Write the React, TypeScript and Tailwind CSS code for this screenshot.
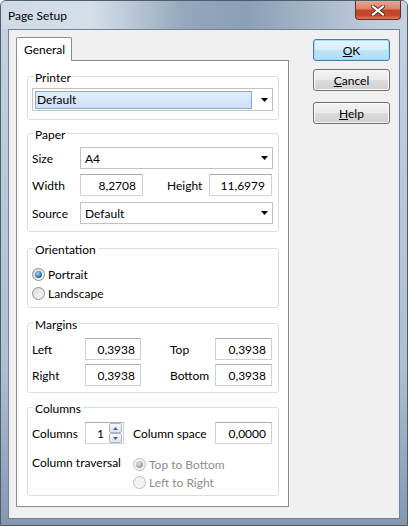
import type { ReactNode } from "react";

function Arrow() {
  return (
    <svg width="7" height="4" viewBox="0 0 7 4" className="shrink-0">
      <path d="M0 0H7L3.5 4Z" fill="#000" />
    </svg>
  );
}

function Combo({
  value,
  className = "",
  focused = false,
}: {
  value: string;
  className?: string;
  focused?: boolean;
}) {
  return (
    <div
      className={`flex items-center border border-[#c2c2c2] bg-white ${className}`}
    >
      {focused ? (
        <div className="ml-[2px] flex h-[18px] flex-1 items-center border border-[#85acdc] bg-[linear-gradient(to_bottom,#e0edfc,#cde0f8)] pl-[1px]">
          {value}
        </div>
      ) : (
        <div className="flex-1 pl-[4px]">{value}</div>
      )}
      <div className="flex w-[20px] justify-end pr-[4px]">
        <Arrow />
      </div>
    </div>
  );
}

function NumBox({ value, className = "" }: { value: string; className?: string }) {
  return (
    <div
      className={`flex h-[22px] items-center justify-end border border-[#cfd1d6] border-t-[#abadb3] bg-white pr-[5px] ${className}`}
    >
      {value}
    </div>
  );
}

function Radio({ checked = false, disabled = false }: { checked?: boolean; disabled?: boolean }) {
  return (
    <span
      className={`flex h-[13px] w-[13px] shrink-0 items-center justify-center rounded-full border ${
        disabled
          ? "border-[#bcbcbc] bg-[#f2f2f2]"
          : "border-[#8b8e93] bg-[linear-gradient(135deg,#d6d8db,#fbfbfb)]"
      }`}
    >
      {checked && (
        <span
          className={`h-[7px] w-[7px] rounded-full ${
            disabled
              ? "bg-[radial-gradient(circle_at_40%_35%,#e2e2e2,#9a9a9a_75%)]"
              : "bg-[radial-gradient(circle_at_40%_35%,#a8d6f7,#1d5c96_75%)]"
          }`}
        />
      )}
    </span>
  );
}

function Group({
  title,
  className = "",
  children,
}: {
  title: string;
  className?: string;
  children: ReactNode;
}) {
  return (
    <fieldset className={`w-[252px] rounded-[3px] border border-[#d5dfe5] ${className}`}>
      <legend className="ml-[5px] px-[2px] leading-[14px]">
        {/* Segoe-style labels sit a little below the group line */}
        <span className="relative top-[2px]">{title}</span>
      </legend>
      {children}
    </fieldset>
  );
}

function Btn({ children, def = false }: { children: ReactNode; def?: boolean }) {
  return (
    <div
      className={`flex h-[22px] w-[77px] items-center justify-center rounded-[3px] border ${
        def
          ? "border-[#3c7fb1] bg-[linear-gradient(to_bottom,#e6f4fc_0%,#d6eefb_50%,#bfe3f7_50%,#b0dbf3_100%)] shadow-[inset_0_0_0_1px_#9fdcf9]"
          : "border-[#707070] bg-[linear-gradient(to_bottom,#f2f2f2_0%,#ebebeb_50%,#dddddd_50%,#cfcfcf_100%)] shadow-[inset_0_0_0_1px_#fbfbfb]"
      }`}
    >
      {children}
    </div>
  );
}

function CloseButton() {
  return (
    <div className="mr-[6px] flex h-[19px] w-[46px] items-center justify-center rounded-b-[4px] border border-t-0 border-[#6d2b1f] bg-[linear-gradient(to_bottom,#e9a896_0%,#d9806a_45%,#c2482a_50%,#c9452a_80%,#e07a5c_100%)]">
      <svg width="14" height="11" viewBox="0 0 14 11">
        <path d="M2 1.5L12 9.5M12 1.5L2 9.5" stroke="#5a2a22" strokeWidth="4" strokeLinecap="square" />
        <path d="M2 1.5L12 9.5M12 1.5L2 9.5" stroke="#ffffff" strokeWidth="2.2" strokeLinecap="square" />
      </svg>
    </div>
  );
}

export default function App() {
  return (
    <div className="flex h-[526px] w-[408px] flex-col overflow-hidden rounded-t-[6px] border border-[#4f5c6b] bg-[linear-gradient(to_bottom,#c5d3e2,#aebfd2_70%,#8498b0)] font-['Lato','Liberation_Sans',sans-serif] text-[12px] leading-[15px] text-black">
      {/* Title bar */}
      <div className="flex h-[28px] shrink-0 items-start justify-between bg-[linear-gradient(to_right,#cfdae6_0%,#d5dfe9_22%,#bac8d7_32%,#95a8be_45%,#8a9eb6_60%,#a3b4c7_75%,#bccadb_90%,#c4d1df_100%)]">
        <span className="ml-[7px] mt-[7px]">Page Setup</span>
        <CloseButton />
      </div>

      {/* Client area */}
      <div className="mx-[7px] mb-[6px] flex flex-1 border border-[#708095] bg-[#f0f0f0] pl-[7px] pt-[7px]">
        <div className="flex w-[273px] flex-col">
          <div className="flex h-[24px] shrink-0">
            <div className="relative z-10 flex h-[24px] w-[56px] items-center rounded-t-[2px] border border-b-0 border-[#898c95] bg-white pl-[7px]">
              General
            </div>
          </div>
          <div className="-mt-px h-[447px] border border-[#898c95] bg-white px-[10px] pt-[8px]">
            <Group title="Printer">
              <div className="px-[4px] pb-[8px] pt-[5px]">
                <Combo value="Default" focused className="h-[23px] w-[241px]" />
              </div>
            </Group>

            <Group title="Paper" className="mt-[6px]">
              <div className="px-[4px] pb-[7px] pt-[7px]">
                <div className="flex items-center">
                  <span className="w-[48px]">Size</span>
                  <Combo value="A4" className="h-[22px] w-[193px]" />
                </div>
                <div className="mt-[5px] flex items-center">
                  <span className="w-[48px]">Width</span>
                  <NumBox value="8,2708" className="w-[63px] pr-[6px]" />
                  <span className="ml-[24px] w-[42px]">Height</span>
                  <NumBox value="11,6979" className="w-[63px] pr-[6px]" />
                </div>
                <div className="mt-[6px] flex items-center">
                  <span className="w-[48px]">Source</span>
                  <Combo value="Default" className="h-[22px] w-[193px]" />
                </div>
              </div>
            </Group>

            <Group title="Orientation" className="mt-[9px]">
              <div className="px-[4px] pb-[6px] pt-[11px]">
                <div className="flex h-[16px] items-center gap-[3px]">
                  <Radio checked />
                  <span>Portrait</span>
                </div>
                <div className="mt-[3px] flex h-[16px] items-center gap-[3px]">
                  <Radio />
                  <span>Landscape</span>
                </div>
              </div>
            </Group>

            <Group title="Margins" className="mt-[8px]">
              <div className="px-[4px] pb-[6px] pt-[8px]">
                <div className="flex items-center">
                  <span className="w-[53px]">Left</span>
                  <NumBox value="0,3938" className="w-[56px]" />
                  <span className="ml-[29px] w-[45px]">Top</span>
                  <NumBox value="0,3938" className="w-[57px]" />
                </div>
                <div className="mt-[4px] flex items-center">
                  <span className="w-[53px]">Right</span>
                  <NumBox value="0,3938" className="w-[56px]" />
                  <span className="ml-[29px] w-[45px]">Bottom</span>
                  <NumBox value="0,3938" className="w-[57px]" />
                </div>
              </div>
            </Group>

            <Group title="Columns" className="mt-[7px]">
              <div className="px-[4px] pb-[5px] pt-[8px]">
                <div className="flex items-center">
                  <span className="w-[53px]">Columns</span>
                  <div className="flex h-[22px] w-[39px] items-center border border-[#cfd1d6] border-t-[#abadb3] bg-white">
                    <span className="flex-1 pr-[5px] text-right">1</span>
                    <div className="mr-[1px] flex flex-col">
                      <div className="flex h-[10px] w-[13px] items-center justify-center rounded-[2px] border border-[#a9b6c6] bg-[linear-gradient(to_bottom,#f6f8fb,#dde5ef)]">
                        <svg width="5" height="3" viewBox="0 0 5 3">
                          <path d="M0 3H5L2.5 0Z" fill="#4a6287" />
                        </svg>
                      </div>
                      <div className="flex h-[10px] w-[13px] items-center justify-center rounded-[2px] border border-[#a9b6c6] bg-[linear-gradient(to_bottom,#f6f8fb,#dde5ef)]">
                        <svg width="5" height="3" viewBox="0 0 5 3">
                          <path d="M0 0H5L2.5 3Z" fill="#4a6287" />
                        </svg>
                      </div>
                    </div>
                  </div>
                  <span className="ml-[9px] w-[82px]">Column space</span>
                  <NumBox value="0,0000" className="w-[57px]" />
                </div>
                <div className="mt-[12px] flex">
                  <span className="w-[101px] leading-[14px]">Column traversal</span>
                  <div className="flex flex-col">
                    <div className="flex h-[16px] items-center gap-[3px] text-[#8d8d8d]">
                      <Radio checked disabled />
                      <span>Top to Bottom</span>
                    </div>
                    <div className="mt-[2px] flex h-[16px] items-center gap-[3px] text-[#8d8d8d]">
                      <Radio disabled />
                      <span>Left to Right</span>
                    </div>
                  </div>
                </div>
              </div>
            </Group>
          </div>
        </div>

        <div className="ml-[24px] mt-[2px] flex flex-col">
          <Btn def>
            <span>
              <span className="underline">O</span>K
            </span>
          </Btn>
          <div className="mt-[8px]">
            <Btn>
              <span>
                <span className="underline">C</span>ancel
              </span>
            </Btn>
          </div>
          <div className="mt-[11px]">
            <Btn>
              <span>
                <span className="underline">H</span>elp
              </span>
            </Btn>
          </div>
        </div>
      </div>
    </div>
  );
}
